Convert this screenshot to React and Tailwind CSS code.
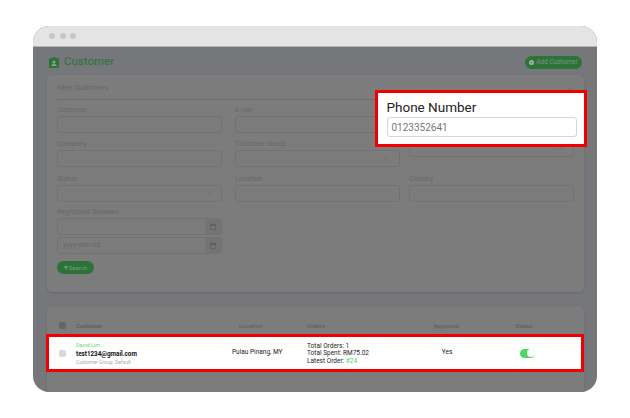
import { ChevronDown, ChevronUp } from 'lucide-react';
import { FaFilter, FaCirclePlus, FaRegCalendar } from 'react-icons/fa6';

function BadgeIcon() {
    return (
        <svg viewBox="0 0 10 11" className="w-[10px] h-[11px]" fill="currentColor">
            <path d="M3.5 0h3v1.2H9a1 1 0 0 1 1 1V10a1 1 0 0 1-1 1H1a1 1 0 0 1-1-1V2.2a1 1 0 0 1 1-1h2.5z" />
            <circle cx="5" cy="5" r="1.5" fill="#8fa394" />
            <path d="M2.3 9c0-1.3 1-2 2.7-2s2.7.7 2.7 2z" fill="#8fa394" />
        </svg>
    );
}

function Field({ label, select, className }) {
    return (
        <div className={className}>
            <div className="text-[7px] leading-[10px] text-[#66686a] mb-[1px]">{label}</div>
            <div className="h-[17px] w-[165px] rounded-[3px] border border-[#707274] flex items-center justify-end pr-[9px]">
                {select && <ChevronDown className="w-[7px] h-[7px] text-[#66686a]" strokeWidth={2} />}
            </div>
        </div>
    );
}

function DateField({ placeholder }) {
    return (
        <div className="h-[17px] w-[165px] rounded-[3px] border border-[#707274] flex items-stretch overflow-hidden">
            <div className="flex-1 pl-[5px] text-[7px] leading-[14px] text-[#66686a]">{placeholder}</div>
            <div className="w-[16px] bg-[#727476] flex items-center justify-center">
                <FaRegCalendar className="w-[6px] h-[7px] text-[#5c5e60]" />
            </div>
        </div>
    );
}

export default function App() {
    return (
        <div className="relative w-[630px] h-[418px] bg-white pt-[26px] pl-[33px] font-['Roboto',sans-serif]">
            <div className="w-[564px] h-[366px] rounded-[16px] overflow-hidden flex flex-col bg-[#75777a]">
                {/* Browser bar */}
                <div className="h-[21px] shrink-0 bg-[#e4e4e4] border-b border-[#b5b5b5] flex items-center gap-[4.5px] pl-[16px]">
                    <span className="w-[6px] h-[6px] rounded-full bg-[#c6c6c6]"></span>
                    <span className="w-[6px] h-[6px] rounded-full bg-[#c6c6c6]"></span>
                    <span className="w-[6px] h-[6px] rounded-full bg-[#c6c6c6]"></span>
                </div>

                <div className="flex-1 pl-[14px] pr-[13px]">
                    {/* Title */}
                    <div className="h-[28px] pt-[2px] flex items-center justify-between pl-[2px] pr-[2px]">
                        <div className="flex items-center gap-[5px] text-[#2b7338]">
                            <BadgeIcon />
                            <span className="text-[11.5px] leading-none">Customer</span>
                        </div>
                        <div className="h-[13px] w-[57px] rounded-full bg-[#2b7338] flex items-center justify-center gap-[2px] text-[6.5px] leading-[13px] text-[#7f9484]">
                            <FaCirclePlus className="w-[5px] h-[5px] text-[#a3b3a7]" />
                            <span>Add Customer</span>
                        </div>
                    </div>

                    {/* Filter card */}
                    <div className="h-[217px] w-[537px] rounded-[5px] bg-[#7c7c7c] shadow-[0_1px_2px_#65676a] px-[10px]">
                        <div className="h-[25px] pt-[3px] border-b border-[#696b6d] flex items-center justify-between text-[7px] text-[#66686a]">
                            <span>Filter Customers</span>
                            <ChevronUp className="w-[9px] h-[9px] mr-[-1px] text-[#66686a]" />
                        </div>
                        <div className="grid grid-cols-[178px_174px_166px] gap-y-[6.5px] pt-[4.5px]">
                            <Field label="Customer" />
                            <Field label="E-mel" />
                            <Field />
                            <Field label="Company" />
                            <Field label="Customer Group" select />
                            <Field select />
                            <Field label="Status" select />
                            <Field label="Location" />
                            <Field label="Country" />
                        </div>
                        <div className="pt-[5px]">
                            <div className="text-[7px] leading-[10px] text-[#66686a] mb-[1px]">Registered Between</div>
                            <div className="flex flex-col gap-[2.5px]">
                                <DateField placeholder="" />
                                <DateField placeholder="yyyy-mm-dd" />
                            </div>
                            <div className="mt-[7px] h-[13px] w-[37px] rounded-full bg-[#2b7338] flex items-center justify-center gap-[1px] text-[6px] text-[#7d9a82]">
                                <FaFilter className="w-[4px] h-[4px]" />
                                Search
                            </div>
                        </div>
                    </div>

                    {/* Customers table */}
                    <div className="mt-[14px] h-[100px] w-[537px] rounded-[5px] bg-[#7c7c7c] shadow-[0_1px_2px_#65676a]">
                        <div className="h-[28px] pt-[10px] grid grid-cols-[29px_136px_95px_110px_58px_98px] items-center text-[6px] font-medium text-[#5f6163]">
                            <span className="w-[7px] h-[7px] rounded-[2px] bg-[#636567] ml-[12px]"></span>
                            <span className="font-bold">Customer</span>
                            <span className="pl-[27px]">Location</span>
                            <span>Orders</span>
                            <span className="text-center">Approved</span>
                            <span className="text-center">Status</span>
                        </div>
                        <div className="-ml-[1.5px] h-[38px] w-[538px] bg-white border-[3px] border-[#f00000] grid grid-cols-[27.5px_136px_95px_110px_58px_98px] items-center text-[#222222]">
                            <span className="w-[7px] h-[7px] rounded-[2px] bg-[#d9d9d9] ml-[10.5px]"></span>
                            <div className="flex flex-col">
                                <span className="text-[5.5px] leading-[9px] text-[#63d96f]">David Lim</span>
                                <span className="text-[6.3px] leading-[9px] font-bold text-[#111111]">test1234@gmail.com</span>
                                <span className="text-[5px] leading-[6px] text-[#aaaaaa]">Customer Group: Default</span>
                            </div>
                            <span className="pl-[20px] text-[6.5px]">Pulau Pinang, MY</span>
                            <div className="flex flex-col pt-[2px] text-[6.5px] leading-[7.5px]">
                                <span>Total Orders: 1</span>
                                <span>Total Spent: RM75.02</span>
                                <span>Latest Order: <span className="text-[#4fd562]">#24</span></span>
                            </div>
                            <span className="text-center pl-[2px] text-[6.5px]">Yes</span>
                            <div className="flex justify-center pl-[7px]">
                                <span className="w-[15px] h-[9px] rounded-full bg-[#4fd562] flex items-center justify-end pr-[0.5px]">
                                    <span className="w-[8px] h-[8px] rounded-full bg-white"></span>
                                </span>
                            </div>
                        </div>
                    </div>
                </div>
            </div>

            {/* Phone number callout */}
            <div className="absolute left-[375px] top-[90px] w-[212px] h-[57px] bg-white border-[3px] border-[#f00000] pl-[8.5px] pt-[5px]">
                <div className="text-[13.5px] leading-[18px] text-[#222222]">Phone Number</div>
                <div className="mt-[1px] w-[190px] h-[20px] rounded-[3px] border border-[#d6d6d6] flex items-center pl-[4px] text-[10px] text-[#777777]">
                    0123352641
                </div>
            </div>
        </div>
    );
}
